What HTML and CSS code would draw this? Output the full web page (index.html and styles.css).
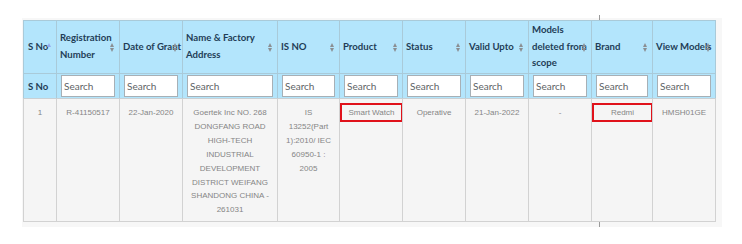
FILE: index.html
```html
<!DOCTYPE html>
<html>
<head>
<meta charset="utf-8">
<link rel="stylesheet" href="styles.css">
</head>
<body>
<div class="wrap">
  <span class="tick"></span>
  <table class="grid">
    <colgroup>
      <col class="c33"><col class="c63"><col class="c63"><col class="c95"><col class="c62"><col class="c63"><col class="c63"><col class="c63"><col class="c63"><col class="c61"><col class="c63">
    </colgroup>
    <thead>
      <tr class="head">
        <th>S No<span class="sort asc"></span></th>
        <th>Registration Number<span class="sort"></span></th>
        <th><span class="nowrap">Date of Grant</span><span class="sort"></span></th>
        <th>Name &amp; Factory Address<span class="sort"></span></th>
        <th>IS NO<span class="sort"></span></th>
        <th>Product<span class="sort"></span></th>
        <th>Status<span class="sort"></span></th>
        <th>Valid Upto<span class="sort"></span></th>
        <th>Models deleted from scope<span class="sort"></span></th>
        <th>Brand<span class="sort"></span></th>
        <th><span class="nowrap">View Models</span><span class="sort"></span></th>
      </tr>
      <tr class="filters">
        <th class="sno">S No</th>
        <th><input type="text" placeholder="Search"></th>
        <th><input type="text" placeholder="Search"></th>
        <th><input type="text" placeholder="Search"></th>
        <th><input type="text" placeholder="Search"></th>
        <th><input type="text" placeholder="Search"></th>
        <th><input type="text" placeholder="Search"></th>
        <th><input type="text" placeholder="Search"></th>
        <th><input type="text" placeholder="Search"></th>
        <th><input type="text" placeholder="Search"></th>
        <th><input type="text" placeholder="Search"></th>
      </tr>
    </thead>
    <tbody>
      <tr class="row">
        <td>1</td>
        <td>R-41150517</td>
        <td>22-Jan-2020</td>
        <td>Goertek Inc NO. 268 DONGFANG ROAD HIGH-TECH INDUSTRIAL DEVELOPMENT DISTRICT WEIFANG SHANDONG CHINA - 261031</td>
        <td>IS 13252(Part 1):2010/ IEC 60950-1 : 2005</td>
        <td class="marked"><span class="mark">Smart Watch</span></td>
        <td>Operative</td>
        <td>21-Jan-2022</td>
        <td>-</td>
        <td class="marked"><span class="mark">Redmi</span></td>
        <td>HMSH01GE</td>
      </tr>
    </tbody>
  </table>
</div>
</body>
</html>
```

FILE: styles.css
```css
html, body {
  margin: 0;
  padding: 0;
  background: #ffffff;
}

.wrap {
  position: relative;
  width: 696px;
  margin: 18px 0 0 22px;
  padding: 2px 3px 5px 1px;
  background: #f7f7f7;
}

.tick {
  position: absolute;
  left: 577px;
  top: -3px;
  bottom: 0;
  width: 1px;
  background: #9a9a9a;
}

.grid {
  position: relative;
  width: 692px;
  table-layout: fixed;
  border-collapse: collapse;
  border: 1px solid #c9d3d8;
}

.c33 { width: 33px; }
.c61 { width: 61px; }
.c62 { width: 62px; }
.c63 { width: 63px; }
.c95 { width: 95px; }

.head th {
  position: relative;
  height: 52px;
  padding: 0 0 0 3px;
  background: #b3e5fc;
  border: 1px solid #a9cad9;
  color: #1f3d57;
  font-family: Lato, "Open Sans", sans-serif;
  font-weight: 700;
  font-size: 9.6px;
  line-height: 16.7px;
  text-align: left;
  vertical-align: middle;
  overflow: visible;
}

.head th:first-child {
  padding-left: 4px;
}

.nowrap {
  white-space: nowrap;
}

.sort {
  position: absolute;
  right: 4px;
  top: 50%;
  width: 5px;
  height: 9px;
  margin-top: -4px;
}

.sort::before,
.sort::after {
  content: "";
  position: absolute;
  left: 0;
  border-left: 2.5px solid transparent;
  border-right: 2.5px solid transparent;
}

.sort::before {
  top: 0;
  border-bottom: 4px solid #8a8f93;
}

.sort::after {
  bottom: 0;
  border-top: 4px solid #8a8f93;
}

.sort.asc {
  top: 22px;
  margin-top: 0;
  height: 4px;
}

.sort.asc::before {
  border-bottom-color: #93a7ee;
}

.sort.asc::after {
  display: none;
}

.filters th {
  height: 22px;
  padding: 1px 4px;
  background: #b3e5fc;
  border: 1px solid #a9cad9;
  border-bottom-color: #c9d0d4;
  text-align: left;
}

.filters th.sno {
  color: #1f3d57;
  font-family: Lato, "Open Sans", sans-serif;
  font-weight: 700;
  font-size: 9.6px;
}

.filters input {
  display: block;
  box-sizing: border-box;
  width: 100%;
  height: 22px;
  margin: 0;
  padding: 0 2px;
  border: 1px solid #a7b0b6;
  background: #ffffff;
  font-family: Lato, "Open Sans", sans-serif;
  font-size: 10px;
  color: #555555;
  outline: none;
}

.filters input::placeholder {
  color: #5e6366;
  opacity: 1;
}

.row td {
  padding: 7px 6px 4px;
  background: #f5f5f5;
  border: 1px solid #d2d2d2;
  color: #858585;
  font-family: "Liberation Sans", Arial, sans-serif;
  font-size: 8px;
  line-height: 13.9px;
  text-align: center;
  vertical-align: top;
  word-wrap: break-word;
}

.row td.marked {
  padding: 4px 0 0;
}

.mark {
  display: block;
  margin: 0 -1px 0 0;
  border: 2px solid #e0121b;
  line-height: 15px;
}
```
